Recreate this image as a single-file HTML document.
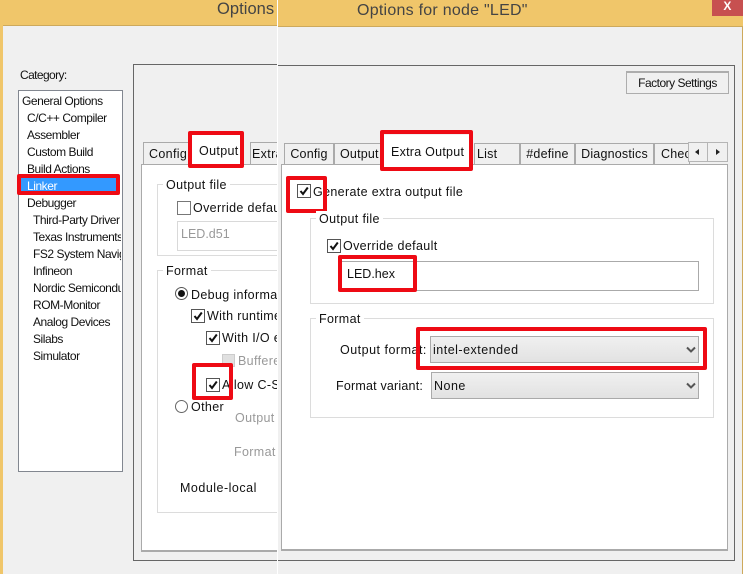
<!DOCTYPE html>
<html><head><meta charset="utf-8">
<style>
html,body{margin:0;padding:0}
body{width:743px;height:574px;overflow:hidden;position:relative;background:#f0f0f0;font-family:"Liberation Sans",sans-serif;font-size:12.5px;color:#111}
div,span{position:absolute;box-sizing:border-box}
.t{white-space:nowrap;line-height:16px;letter-spacing:.35px}
.l{font-size:12px;letter-spacing:-.45px}
.g{color:#999}
.cb{width:14px;height:14px;border:1px solid #555;background:#fff}
.cb.off{border-color:#777}
.cb svg{position:absolute;left:0;top:0}
.red{border:4px solid #ee0a14;border-radius:2px}
.tab{background:#f0f0f0;border:1px solid #aaa;border-bottom:0;height:21px;line-height:20px;white-space:nowrap;text-align:center;overflow:hidden;letter-spacing:.2px}
.gb{border:1px solid #dcdcdc}
.lg{background:#fff;padding:0 3px;line-height:16px;white-space:nowrap}
.sel{height:27px;border:1px solid #aaa;background:linear-gradient(#f0f0f0,#e2e2e2);line-height:27px;padding-left:2px;letter-spacing:.5px}
</style></head><body>

<!-- LEFT WINDOW -->
<div style="left:0;top:0;width:278px;height:26px;background:#f0c66a"></div>
<div style="left:0;top:26px;width:3px;height:548px;background:#f0c66a"></div>
<div style="left:3px;top:25px;width:275px;height:1px;background:#cda95c"></div>
<div class="t" style="left:217px;top:0;font-size:16.5px;line-height:19px;color:#444;letter-spacing:.05px">Options</div>
<div class="t" style="left:20px;top:67px;font-size:12px;letter-spacing:-.6px">Category:</div>

<div style="left:18px;top:90px;width:105px;height:382px;background:#fff;border:1px solid #828790"></div>
<div class="t l" style="left:22px;top:93px">General Options</div>
<div class="t l" style="left:27px;top:110px">C/C++ Compiler</div>
<div class="t l" style="left:27px;top:127px">Assembler</div>
<div class="t l" style="left:27px;top:144px">Custom Build</div>
<div class="t l" style="left:27px;top:161px">Build Actions</div>
<div style="left:17px;top:174px;width:103px;height:21px;background:#3399ff" class="red"></div>
<div class="t l" style="left:27px;top:178px;color:#fff">Linker</div>
<div class="t l" style="left:27px;top:195px">Debugger</div>
<div style="left:33px;top:212px;width:88px;height:160px;overflow:hidden">
<span class="t l" style="left:0;top:0">Third-Party Driver</span>
<span class="t l" style="left:0;top:17px">Texas Instruments</span>
<span class="t l" style="left:0;top:34px">FS2 System Navigator</span>
<span class="t l" style="left:0;top:51px">Infineon</span>
<span class="t l" style="left:0;top:68px">Nordic Semiconductor</span>
<span class="t l" style="left:0;top:85px">ROM-Monitor</span>
<span class="t l" style="left:0;top:102px">Analog Devices</span>
<span class="t l" style="left:0;top:119px">Silabs</span>
<span class="t l" style="left:0;top:136px">Simulator</span>
</div>

<div style="left:133px;top:64px;width:145px;height:497px;border:1px solid #666;border-right:0;border-width:1px 0 1px 1px"></div>
<div style="left:141px;top:164px;width:137px;height:388px;background:#fff;border:1px solid #aaa;border-right:0;border-bottom-width:2px"></div>
<div class="tab" style="left:143px;top:142px;width:47px;height:22px;text-align:left"><span class="t" style="left:5px;top:3px">Config</span></div>
<div class="tab" style="left:250px;top:142px;width:28px;height:22px;border-right:0;text-align:left"><span class="t" style="left:1px;top:3px">Extra</span></div>
<div style="left:190px;top:134px;width:54px;height:33px;background:#fff"></div>
<div class="t" style="left:199px;top:143px">Output</div>
<div class="red" style="left:188px;top:131px;width:56px;height:37px"></div>

<div class="gb" style="left:157px;top:184px;width:121px;height:72px;border-right:0"></div>
<div class="lg t" style="left:163px;top:177px">Output file</div>
<div class="cb off" style="left:177px;top:201px"></div>
<div class="t" style="left:193px;top:200px">Override default</div>
<div style="left:177px;top:221px;width:101px;height:30px;border:1px solid #d9d9d9;border-right:0"></div>
<div class="t g" style="left:181px;top:226px;letter-spacing:0">LED.d51</div>

<div class="gb" style="left:157px;top:270px;width:121px;height:243px;border-right:0"></div>
<div class="lg t" style="left:163px;top:263px">Format</div>
<div style="left:175px;top:287px;width:13px;height:13px;border:1px solid #555;border-radius:50%;background:#fff"></div>
<div style="left:178px;top:290px;width:7px;height:7px;border-radius:50%;background:#111"></div>
<div class="t" style="left:191px;top:287px">Debug information</div>
<div class="cb" style="left:191px;top:309px"><svg width="12" height="12" viewBox="0 0 12 12"><path d="M2.5 6l2.5 3L9.8 2.5" fill="none" stroke="#111" stroke-width="2"/></svg></div>
<div class="t" style="left:207px;top:308px">With runtime</div>
<div class="cb" style="left:206px;top:331px"><svg width="12" height="12" viewBox="0 0 12 12"><path d="M2.5 6l2.5 3L9.8 2.5" fill="none" stroke="#111" stroke-width="2"/></svg></div>
<div class="t" style="left:222px;top:330px">With I/O e</div>
<div style="left:222px;top:354px;width:13px;height:13px;border:1px solid #ccc;background:#e0e0e0"></div>
<div class="t g" style="left:238px;top:353px">Buffered</div>
<div class="cb" style="left:206px;top:378px"><svg width="12" height="12" viewBox="0 0 12 12"><path d="M2.5 6l2.5 3L9.8 2.5" fill="none" stroke="#111" stroke-width="2"/></svg></div>
<div class="t" style="left:222px;top:377px">Allow C-S</div>
<div class="red" style="left:192px;top:363px;width:41px;height:37px"></div>
<div style="left:175px;top:400px;width:13px;height:13px;border:1px solid #666;border-radius:50%;background:#fff"></div>
<div class="t" style="left:191px;top:399px">Other</div>
<div class="t g" style="left:235px;top:410px">Output</div>
<div class="t g" style="left:234px;top:444px">Format</div>
<div class="t" style="left:180px;top:480px;letter-spacing:.5px">Module-local</div>

<!-- RIGHT WINDOW -->
<div style="left:277px;top:0;width:1px;height:574px;background:#fff"></div>
<div style="left:278px;top:0;width:465px;height:26px;background:#f0c66a"></div>
<div style="left:278px;top:26px;width:465px;height:1px;background:#cda95c"></div>
<div style="left:278px;top:27px;width:464px;height:547px;background:#f0f0f0"></div>
<div style="left:739px;top:27px;width:4px;height:547px;background:#f0f0f0;border-right:1px solid #cda95c"></div>
<div class="t" style="left:357px;top:1px;font-size:16px;line-height:19px;color:#444;letter-spacing:.25px">Options for node "LED"</div>
<div style="left:712px;top:0;width:31px;height:16px;background:#c75050"></div>
<div class="t" style="left:712px;top:0;width:31px;text-align:center;color:#fff;font-size:12px;line-height:13px;font-weight:bold">X</div>

<div style="left:278px;top:65px;width:457px;height:496px;border:1px solid #666;border-left:0"></div>
<div style="left:626px;top:71px;width:103px;height:23px;border:1px solid #adadad;border-top-width:2px;background:#f0f0f0;text-align:center;line-height:20px;font-size:12px;letter-spacing:-.5px">Factory Settings</div>

<div style="left:281px;top:164px;width:447px;height:387px;background:#fff;border:1px solid #aaa;border-bottom-width:2px;border-left-width:1px"></div>
<div class="tab" style="left:284px;top:143px;width:50px">Config</div>
<div class="tab" style="left:334px;top:143px;width:50px;text-align:left;padding-left:5px">Output</div>
<div class="tab" style="left:474px;top:143px;width:46px;text-align:left;padding-left:2px">List</div>
<div class="tab" style="left:520px;top:143px;width:55px">#define</div>
<div class="tab" style="left:575px;top:143px;width:79px">Diagnostics</div>
<div class="tab" style="left:654px;top:143px;width:36px;text-align:left;padding-left:6px">Check</div>
<div style="left:688px;top:142px;width:40px;height:20px;background:#f0f0f0;border:1px solid #b5b5b5"></div>
<div style="left:707px;top:142px;width:1px;height:20px;background:#b5b5b5"></div>
<div style="left:695px;top:149px;border:3px solid transparent;border-right:4px solid #222;border-left:0;width:4px;height:6px"></div>
<div style="left:716px;top:149px;border:3px solid transparent;border-left:4px solid #222;border-right:0;width:4px;height:6px"></div>

<div style="left:382px;top:135px;width:88px;height:32px;background:#fff"></div>
<div class="t" style="left:391px;top:144px;letter-spacing:.25px">Extra Output</div>
<div class="red" style="left:380px;top:130px;width:93px;height:41px"></div>

<div class="cb" style="left:297px;top:184px"><svg width="12" height="12" viewBox="0 0 12 12"><path d="M2.5 6l2.5 3L9.8 2.5" fill="none" stroke="#111" stroke-width="2"/></svg></div>
<div class="t" style="left:313px;top:184px">Generate extra output file</div>
<div class="red" style="left:286px;top:176px;width:41px;height:37px"></div>

<div class="gb" style="left:310px;top:218px;width:404px;height:86px"></div>
<div class="lg t" style="left:316px;top:211px">Output file</div>
<div class="cb" style="left:327px;top:239px"><svg width="12" height="12" viewBox="0 0 12 12"><path d="M2.5 6l2.5 3L9.8 2.5" fill="none" stroke="#111" stroke-width="2"/></svg></div>
<div class="t" style="left:343px;top:238px">Override default</div>
<div style="left:339px;top:261px;width:360px;height:30px;border:1px solid #aaa;background:#fff"></div>
<div class="t" style="left:347px;top:266px;letter-spacing:0">LED.hex</div>
<div class="red" style="left:338px;top:255px;width:79px;height:37px"></div>

<div class="gb" style="left:310px;top:318px;width:404px;height:100px"></div>
<div class="lg t" style="left:316px;top:311px">Format</div>
<div class="t" style="left:340px;top:342px;letter-spacing:.5px">Output format:</div>
<div class="sel" style="left:430px;top:336px;width:269px">intel-extended</div>
<div class="t" style="left:336px;top:378px;letter-spacing:.2px">Format variant:</div>
<div class="sel" style="left:431px;top:372px;width:268px">None</div>
<svg style="position:absolute;left:686px;top:346px" width="10" height="8" viewBox="0 0 10 8"><path d="M1 1.5l4 4 4-4" fill="none" stroke="#555" stroke-width="2"/></svg>
<svg style="position:absolute;left:686px;top:382px" width="10" height="8" viewBox="0 0 10 8"><path d="M1 1.5l4 4 4-4" fill="none" stroke="#555" stroke-width="2"/></svg>
<div class="red" style="left:416px;top:327px;width:291px;height:43px"></div>

</body></html>
